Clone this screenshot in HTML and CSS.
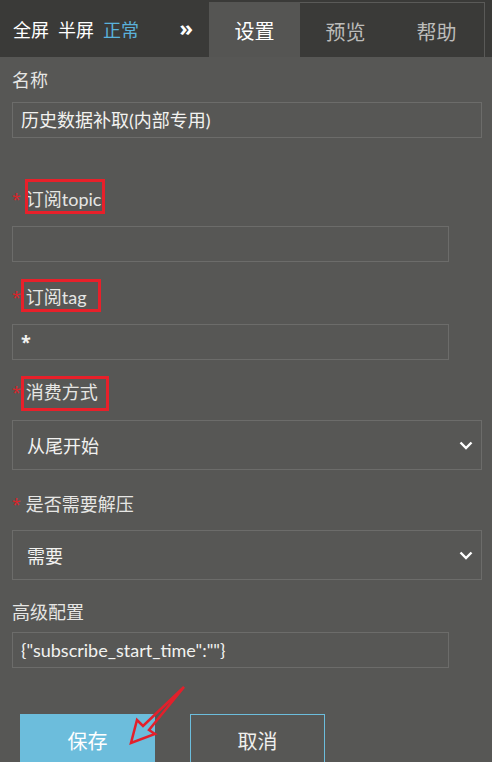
FILE: index.html
```html
<!doctype html>
<html lang="zh">

<head>
  <meta charset="UTF-8">
  <meta name="viewport" content="width=device-width, initial-scale=1.0">
  <title>数据源设置</title>
  <link rel="stylesheet" href="styles.css">
</head>

<body>
  <header class="topbar">
    <div class="modes">
      <span>全屏</span>
      <span>半屏</span>
      <span class="on">正常</span>
      <span class="fold">»</span>
    </div>
    <ul class="tabs">
      <li class="active">设置</li>
      <li>预览</li>
      <li>帮助</li>
    </ul>
  </header>

  <form class="panel">
    <div class="field">
      <label class="label">名称</label>
      <div class="text wide">历史数据补取(内部专用)</div>
    </div>

    <div class="field f-topic">
      <label class="label"><i class="req">*</i><span class="mark m-topic">订阅topic</span></label>
      <div class="text"></div>
    </div>

    <div class="field f-tag">
      <label class="label"><i class="req">*</i><span class="mark m-tag">订阅tag</span></label>
      <div class="text"><span class="sym">*</span></div>
    </div>

    <div class="field f-mode">
      <label class="label"><i class="req">*</i><span class="mark m-mode">消费方式</span></label>
      <div class="select">
        <span>从尾开始</span>
        <svg width="14" height="9" viewBox="0 0 14 9"><polyline points="1.5,1.5 7,7 12.5,1.5" /></svg>
      </div>
    </div>

    <div class="field f-unzip">
      <label class="label"><i class="req">*</i>是否需要解压</label>
      <div class="select">
        <span>需要</span>
        <svg width="14" height="9" viewBox="0 0 14 9"><polyline points="1.5,1.5 7,7 12.5,1.5" /></svg>
      </div>
    </div>

    <div class="field f-adv">
      <label class="label">高级配置</label>
      <div class="text">{"subscribe_start_time":""}</div>
    </div>

    <div class="actions">
      <button type="button" class="btn primary">保存</button>
      <button type="button" class="btn">取消</button>
    </div>
  </form>

  <!-- 标注箭头 -->
  <svg class="arrow" width="492" height="762" viewBox="0 0 492 762">
    <polygon points="184,687 143,726 137,720 131,743 155,734 149,730" />
  </svg>
</body>

</html>
```

FILE: styles.css
```css
* {
  margin: 0;
  padding: 0;
  box-sizing: border-box;
}

body {
  background-color: #575755;
  color: #e6e6e4;
  font-family: Lato, "Noto Sans CJK SC", sans-serif;
  font-size: 18px;
  overflow: hidden;
  position: relative;
}

/* 顶部栏 */
.topbar {
  display: flex;
  height: 57px;
  background-color: #3a3a38;
}

.modes {
  width: 209px;
  display: flex;
  align-items: center;
  gap: 9px;
  padding-left: 13px;
  color: #fff;
}

.modes .on {
  color: #5ab2dc;
}

.modes .fold {
  margin-left: auto;
  margin-right: 16px;
  font-family: "Noto Sans", sans-serif;
  font-size: 22px;
  font-weight: bold;
  line-height: 1;
  padding-bottom: 4px;
}

.tabs {
  list-style: none;
  display: flex;
  margin-top: 2px;
  border-top: 1px solid #5a5a58;
  border-right: 1px solid #5a5a58;
  width: 276px;
}

.tabs li {
  width: 91px;
  text-align: center;
  padding-top: 14px;
  font-size: 20px;
  color: #bcbcba;
}

.tabs li.active {
  background-color: #555553;
  color: #fff;
  margin-top: -1px;
}

/* 表单 */
.panel {
  padding: 11px 10px 0 12px;
}

.label {
  display: block;
  height: 24px;
  line-height: 24px;
  margin-bottom: 10px;
}

.req {
  font-style: normal;
  font-family: "Noto Sans", sans-serif;
  color: #d8252b;
  font-size: 16px;
  line-height: 1;
  margin-right: 5px;
  vertical-align: 1px;
}

/* 截图上的红框标注 */
.mark {
  position: relative;
}

.mark::after {
  content: "";
  position: absolute;
  border: 3px solid #e8202a;
  top: var(--t);
  right: var(--r);
  bottom: var(--b);
  left: var(--l);
}

.m-topic { --t: -9px; --r: -4px; --b: -4px; --l: -1px; }
.m-tag   { --t: -7px; --r: -14px; --b: -4px; --l: -5px; }
.m-mode  { --t: -5px; --r: -11px; --b: -8px; --l: -5px; }

.f-topic { margin-top: 49px; }
.f-tag { margin-top: 23px; }
.f-mode { margin-top: 20px; }
.f-unzip { margin-top: 22px; }
.f-adv { margin-top: 20px; }

.f-topic .label,
.f-tag .label { margin-bottom: 15px; }
.f-mode .label { margin-bottom: 16px; }
.f-unzip .label { margin-bottom: 14px; }
.f-adv .label { margin-bottom: 8px; }

.text {
  width: 437px;
  height: 36px;
  border: 1px solid #6c6c6a;
  padding: 0 8px;
  line-height: 34px;
  color: #f2f2f0;
  white-space: nowrap;
  overflow: hidden;
}

.text .sym {
  font-family: "Noto Sans", sans-serif;
  font-weight: bold;
}

.text.wide {
  width: 470px;
}

.select {
  width: 470px;
  height: 50px;
  border: 1px solid #6c6c6a;
  display: flex;
  align-items: center;
  justify-content: space-between;
  padding: 0 8px 0 14px;
  color: #f2f2f0;
}

.select svg polyline {
  fill: none;
  stroke: #fff;
  stroke-width: 2.4;
}

.actions {
  display: flex;
  gap: 35px;
  margin-top: 46px;
  padding-left: 8px;
}

.btn {
  width: 135px;
  height: 52px;
  border: 1px solid #6cbddc;
  background: transparent;
  color: #f0f0ee;
  font-family: "Noto Sans CJK SC", sans-serif;
  font-size: 20px;
}

.btn.primary {
  background-color: #6cbddc;
  color: #fff;
}

.arrow {
  position: absolute;
  top: 0;
  left: 0;
  pointer-events: none;
}

.arrow polygon {
  fill: none;
  stroke: #e3202b;
  stroke-width: 2.5;
}
```
